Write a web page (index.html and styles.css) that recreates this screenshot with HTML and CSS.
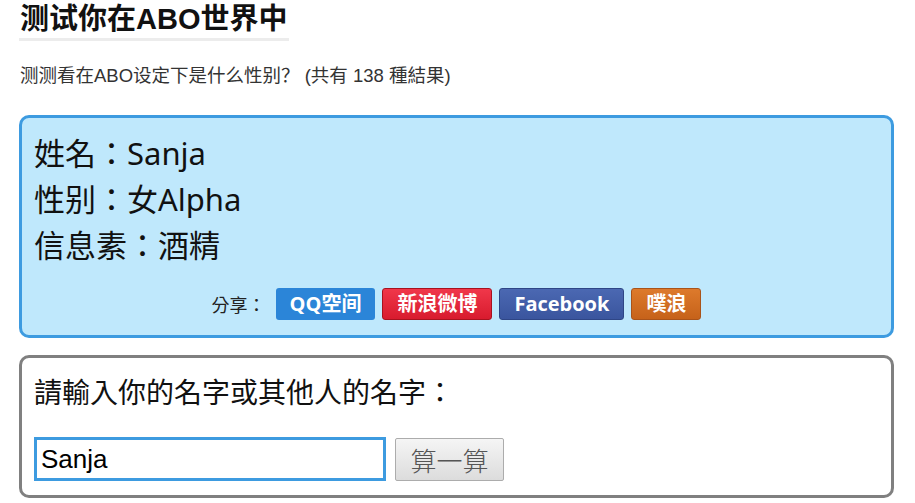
FILE: index.html
```html
<!DOCTYPE html>
<html lang="zh">
<head>
    <meta charset="UTF-8">
    <meta name="viewport" content="width=device-width, initial-scale=1.0">
    <title>测试你在ABO世界中</title>
    <link rel="stylesheet" href="styles.css">
</head>
<body>
    <h1 class="title">测试你在ABO世界中</h1>
    <p class="subtitle">测测看在ABO设定下是什么性别？ (共有 138 種結果)</p>

    <!-- Result -->
    <div class="result" lang="zh-TW">
        <div class="result-line">姓名：Sanja</div>
        <div class="result-line">性别：女Alpha</div>
        <div class="result-line">信息素：酒精</div>
        <div class="share">
            <span class="share-label">分享：</span>
            <a class="share-btn qq">QQ空间</a>
            <a class="share-btn weibo">新浪微博</a>
            <a class="share-btn facebook">Facebook</a>
            <a class="share-btn plurk">噗浪</a>
        </div>
    </div>

    <!-- Input form -->
    <form class="ask" lang="zh-TW">
        <div class="ask-label">請輸入你的名字或其他人的名字：</div>
        <div class="ask-row">
            <input type="text" class="name-input" value="Sanja">
            <button type="button" class="calc-btn">算一算</button>
        </div>
    </form>
</body>
</html>
```

FILE: styles.css
```css
body {
    margin: 0 21px 0 19px;
    font-family: "Liberation Sans", "Noto Sans CJK SC", sans-serif;
    color: #111;
    background: #fff;
}
.title {
    display: inline-block;
    margin: 0 0 0 -1px;
    padding: 0 2px;
    font-size: 29px;
    line-height: 38px;
    font-weight: bold;
    border-bottom: 3px solid #ececec;
}
.subtitle {
    margin: 22px 0 26px 1px;
    font-size: 18.5px;
    line-height: 26px;
    color: #333;
}
.result {
    background: #bfe8fc;
    border: 3px solid #3d9be0;
    border-radius: 10px;
    padding: 12px 12px 15px;
    font-family: "Noto Sans", "Noto Sans CJK TC", sans-serif;
}
.result-line {
    font-size: 31px;
    line-height: 46px;
    color: #111;
}
.share {
    display: flex;
    justify-content: center;
    align-items: center;
    gap: 7px;
    margin-top: 20px;
}
.share-label {
    font-size: 18px;
    color: #222;
    margin-right: 3px;
}
.share-btn {
    display: inline-block;
    height: 32px;
    line-height: 32px;
    padding: 0 14px;
    box-sizing: border-box;
    border-radius: 3px;
    color: #fff;
    font-size: 20px;
    font-weight: bold;
    font-family: "Open Sans", "Noto Sans CJK SC", sans-serif;
}
.qq {
    background: #2b85d8;
}
.weibo {
    background: linear-gradient(#f0374a, #d81b2e);
    border: 1px solid #a8121f;
    line-height: 30px;
}
.facebook {
    background: linear-gradient(#4b68b2, #3a559e);
    border: 1px solid #2f4686;
    line-height: 30px;
}
.plurk {
    background: linear-gradient(#dd7a2c, #c6621a);
    border: 1px solid #a9531a;
    line-height: 30px;
}
.ask {
    margin-top: 17px;
    border: 3px solid #808080;
    border-radius: 10px;
    padding: 14px 12px 14px;
}
.ask-label {
    font-family: "Noto Sans CJK TC", sans-serif;
    font-size: 28px;
    line-height: 38px;
    color: #111;
}
.ask-row {
    display: flex;
    align-items: center;
    gap: 9px;
    margin-top: 27px;
}
.name-input {
    width: 352px;
    height: 44px;
    box-sizing: border-box;
    border: 3px solid #3d9be0;
    padding: 0 4px;
    font-family: "Liberation Sans", sans-serif;
    font-size: 26px;
    color: #000;
    outline: none;
    margin: 0;
}
.calc-btn {
    width: 109px;
    height: 43px;
    border: 1px solid #acacac;
    border-radius: 2px;
    background: linear-gradient(#f5f5f5, #dcdcdc);
    font-family: "Noto Sans CJK TC", serif;
    font-weight: 300;
    font-size: 26px;
    color: #555;
    padding: 0;
    margin: 0;
}
```
